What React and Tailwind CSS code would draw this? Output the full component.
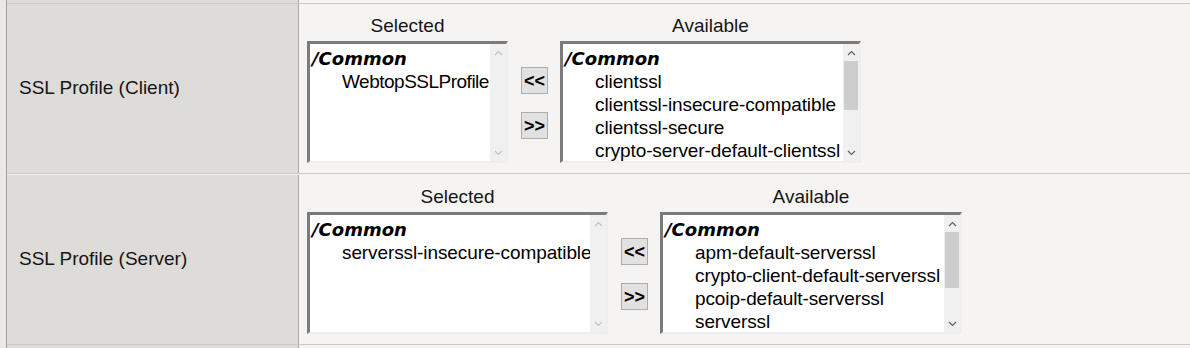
import React from "react";

const Chevron = ({ up, on }) => (
  <svg width="9" height="6" viewBox="0 0 9 6" className="block">
    <polyline
      points={up ? "1,5 4.5,1.5 8,5" : "1,1 4.5,4.5 8,1"}
      fill="none"
      stroke={on ? "#606060" : "#c2c2c2"}
      strokeWidth="1.2"
    />
  </svg>
);

const Scrollbar = ({ on, thumbTop, thumbHeight }) => (
  <div className="flex flex-col w-[16px] shrink-0 bg-[#f0f0f0]">
    <div className="h-[17px] flex items-center justify-center">
      <Chevron up on={on} />
    </div>
    {on && (
      <>
        <div className={thumbTop} />
        <div className={`${thumbHeight} mx-[1px] bg-[#cdcdcd]`} />
      </>
    )}
    <div className="flex-1" />
    <div className="h-[17px] flex items-center justify-center">
      <Chevron on={on} />
    </div>
  </div>
);

const ListBox = ({ title, width, items, scroll, tight }) => (
  <div className="flex flex-col items-center">
    <div className="h-[37px] pt-[11px] leading-[22px] text-[19px] text-[#151515]">{title}</div>
    <div
      className={`${width} h-[122px] flex bg-white border-t-[3px] border-l-[3px] border-r-[2px] border-b-[2px] border-t-[#7b7b7b] border-l-[#7b7b7b] border-r-[#efeeec] border-b-[#efeeec]`}
    >
      <div className="flex-1 overflow-hidden whitespace-nowrap pt-[3px] text-[19px] leading-[23px] text-black">
        <div className="pl-[2px] font-['DejaVu_Sans',sans-serif] font-bold italic text-[18px]">/Common</div>
        {items.map((item) => (
          <div key={item} className={tight ? "pl-[32px] tracking-[-0.5px]" : "pl-[32px] tracking-[-0.1px]"}>
            {item}
          </div>
        ))}
      </div>
      <Scrollbar {...scroll} />
    </div>
  </div>
);

const MoveButtons = () => (
  <div className="flex flex-col gap-[18px] pt-[63px] ml-[13px] mr-[12px]">
    {["<<", ">>"].map((label) => (
      <button
        key={label}
        className="w-[27px] h-[27px] flex items-center justify-center bg-[#e1e1e1] border border-[#adadad] text-[18px] font-bold leading-none text-black"
      >
        {label}
      </button>
    ))}
  </div>
);

const Row = ({ label, height, children }) => (
  <div className={`flex ${height} border-b border-[#c9c8c4]`}>
    <div className="w-[292px] shrink-0 flex items-center pl-[12px] bg-[#dddcd8] border-r border-[#a9a8a4] text-[19px] text-[#151515]">
      {label}
    </div>
    <div className="flex-1 flex items-start pl-[8px]">{children}</div>
  </div>
);

export default function App() {
  return (
    <div className="w-[1190px] h-[348px] overflow-hidden flex bg-[#f5f4f2] font-['Liberation_Sans',Arial,sans-serif]">
      <div className="w-[6px] bg-[#e9e8e4]" />
      <div className="w-px bg-[#a3a2a0]" />
      <div className="flex-1 flex flex-col">
        <Row label="" height="h-[4px]" />
        <Row label="SSL Profile (Client)" height="h-[170px]">
          <ListBox
            title="Selected"
            width="w-[201px]"
            items={["WebtopSSLProfile"]}
            scroll={{ on: false }}
            tight
          />
          <MoveButtons />
          <ListBox
            title="Available"
            width="w-[301px]"
            items={[
              "clientssl",
              "clientssl-insecure-compatible",
              "clientssl-secure",
              "crypto-server-default-clientssl",
            ]}
            scroll={{ on: true, thumbTop: "h-0", thumbHeight: "h-[49px]" }}
          />
        </Row>
        <Row label="SSL Profile (Server)" height="h-[171px] pt-px">
          <ListBox
            title="Selected"
            width="w-[301px]"
            items={["serverssl-insecure-compatible"]}
            scroll={{ on: false }}
          />
          <MoveButtons />
          <ListBox
            title="Available"
            width="w-[302px]"
            items={[
              "apm-default-serverssl",
              "crypto-client-default-serverssl",
              "pcoip-default-serverssl",
              "serverssl",
            ]}
            scroll={{ on: true, thumbTop: "h-0", thumbHeight: "h-[56px]" }}
          />
        </Row>
        <div className="flex flex-1">
          <div className="w-[292px] bg-[#dddcd8] border-r border-[#a9a8a4]" />
        </div>
      </div>
    </div>
  );
}
